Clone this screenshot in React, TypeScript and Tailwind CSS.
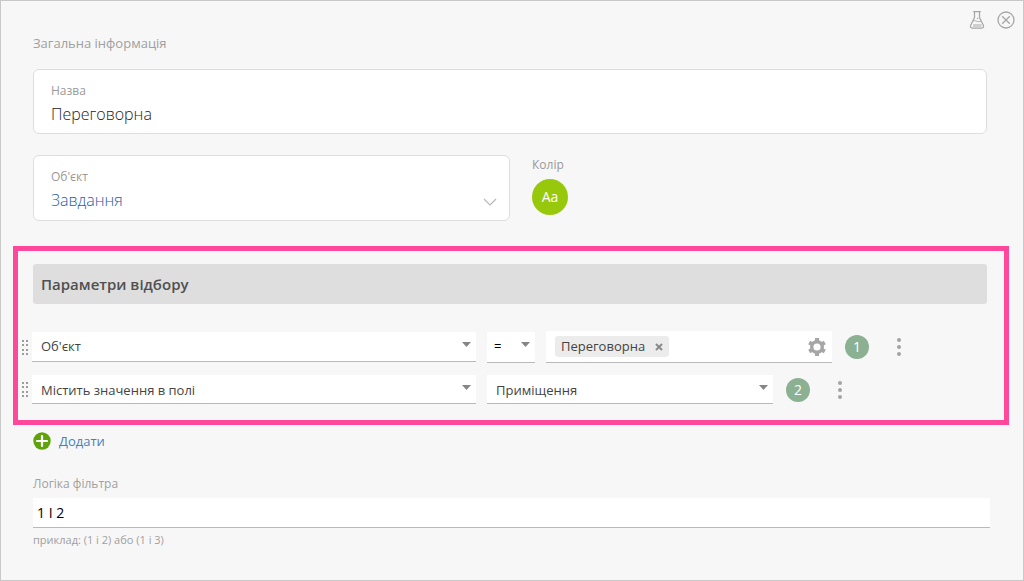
import { ReactNode, useState } from "react";
import clsx from "clsx";

function FlaskIcon() {
  return (
    <svg width="16" height="20" viewBox="0 0 16 20" fill="none" stroke="#a6a6a6">
      <path d="M4.2 1.6h7.6M5.500 2v5.600L1.700 15.200c-.7 1.800 0 2.900 1.600 2.900h9.400c1.600 0 2.300-1.100 1.600-2.900L10.500 7.600V2" strokeWidth="1.200" />
      <path d="M3.600 11.300c1.500-1 2.800-.7 4.200 0s2.800.6 4.300-.6" strokeWidth="0.900" />
      <circle cx="8.600" cy="8.500" r="0.700" fill="#a6a6a6" stroke="none" />
      <rect x="4" y="14" width="8.500" height="3" fill="#cfcfcf" stroke="none" />
    </svg>
  );
}

function CloseIcon() {
  return (
    <svg width="18" height="18" viewBox="0 0 18 18" fill="none" stroke="#a6a6a6" strokeWidth="1.300">
      <circle cx="9" cy="9" r="8" />
      <path d="M5.200 5.200l7.600 7.600M12.800 5.200l-7.600 7.600" />
    </svg>
  );
}

function GearIcon() {
  return (
    <svg width="20" height="20" viewBox="2 2 20 20" fill="none" stroke="#a6a6a6">
      <circle cx="12" cy="12" r="5.300" strokeWidth="3.400" />
      <path
        d="M12 3v3M12 18v3M4.200 7.500l2.600 1.500M17.200 15l2.600 1.500M4.200 16.500l2.600-1.500M17.200 9l2.600-1.500"
        strokeWidth="4"
      />
    </svg>
  );
}

function DragHandle() {
  return (
    <svg className="shrink-0 cursor-move" width="6" height="15" viewBox="0 0 6 15" fill="#9c9c9c">
      {[0, 4, 9, 13].map((y) => (
        <g key={y}>
          <rect x="0" y={y} width="2" height="2" />
          <rect x="4" y={y} width="2" height="2" />
        </g>
      ))}
    </svg>
  );
}

function MoreButton() {
  return (
    <button type="button" aria-label="Ще" className="ml-[26px] flex w-2 justify-center">
      <svg width="4" height="18" viewBox="0 0 4 18" fill="#a3a3a3">
        <circle cx="2" cy="2" r="2" />
        <circle cx="2" cy="9" r="2" />
        <circle cx="2" cy="16" r="2" />
      </svg>
    </button>
  );
}

function Badge({ children }: { children: ReactNode }) {
  return (
    <span className="ml-[13px] flex size-6 shrink-0 items-center justify-center rounded-full bg-[#8cb092] text-sm text-white">
      {children}
    </span>
  );
}

function FlatSelect({
  label,
  options,
  className,
  selectClassName,
}: {
  label: string;
  options: string[];
  className?: string;
  selectClassName?: string;
}) {
  return (
    <div className={clsx("relative", className)}>
      <select
        aria-label={label}
        className={clsx(
          "block w-full appearance-none border-b border-[#b9b9b9] bg-white pr-6 text-[13px] outline-none",
          selectClassName
        )}
      >
        {options.map((option) => (
          <option key={option}>{option}</option>
        ))}
      </select>
      <svg
        className="pointer-events-none absolute top-2.5 right-[5px]"
        width="9"
        height="5"
        viewBox="0 0 9 5"
        fill="#868686"
      >
        <path d="M0 0h9L4.500 5z" />
      </svg>
    </div>
  );
}

export default function App() {
  const [name, setName] = useState("Переговорна");
  const [logic, setLogic] = useState("1 І 2");

  return (
    <div className="relative min-h-screen border border-[#c8c8c8] bg-[#f7f7f7] pt-8 pb-6 font-['Open_Sans','Noto_Sans',sans-serif] text-[#444]">
      <div className="absolute top-[9px] right-2 flex items-center gap-3">
        <button type="button" aria-label="Тест">
          <FlaskIcon />
        </button>
        <button type="button" aria-label="Закрити">
          <CloseIcon />
        </button>
      </div>

      {/* General info */}
      <section className="pr-9 pl-8">
        <h2 className="text-[13px] leading-5 text-[#a0a0a0]">Загальна інформація</h2>

        <div className="mt-4 h-[65px] rounded-md border border-[#dedede] bg-white px-[17px] pt-[13px]">
          <label htmlFor="name" className="block text-xs leading-4 text-[#999]">
            Назва
          </label>
          <input
            id="name"
            value={name}
            onChange={(e) => setName(e.target.value)}
            className="mt-[3px] block h-6 w-full bg-transparent text-base leading-6 font-light text-[#222] outline-none"
          />
        </div>

        <div className="mt-[21px] flex gap-[22px]">
          <div className="relative h-[66px] w-1/2 rounded-md border border-[#dedede] bg-white px-[17px] pt-[13px]">
            <label htmlFor="object" className="block text-xs leading-4 text-[#999]">
              Об'єкт
            </label>
            <select
              id="object"
              className="mt-[3px] block h-6 w-full appearance-none bg-transparent text-base leading-6 font-light text-[#1f5ca8] outline-none"
            >
              <option>Завдання</option>
            </select>
            <svg
              className="pointer-events-none absolute right-3 bottom-[14px]"
              width="14"
              height="8"
              viewBox="0 0 14 8"
              fill="none"
              stroke="#b8b8b8"
              strokeWidth="1.200"
            >
              <path d="M1 1l6 6 6-6" />
            </svg>
          </div>
          <div>
            <div className="text-xs leading-5 text-[#999]">Колір</div>
            <button
              type="button"
              className="mt-1 flex size-9 items-center justify-center rounded-full bg-[#97c80c] text-sm text-white"
            >
              Aa
            </button>
          </div>
        </div>
      </section>

      {/* Selection parameters */}
      <section className="mt-[25px] mr-3.5 ml-3 border-[5px] border-[#ff479c] pt-[13px] pr-[17px] pb-4 pl-1">
        <h2 className="ml-[11px] rounded-[3px] bg-[#dedede] px-2 text-[15px] leading-10 font-semibold text-[#505050]">
          Параметри відбору
        </h2>

        <div className="mt-[27px] flex h-8 items-center">
          <DragHandle />
          <FlatSelect label="Тип умови" options={["Об'єкт"]} className="ml-1 w-[444px]" selectClassName="h-[30px] pl-[9px]" />
          <FlatSelect label="Оператор" options={["="]} className="ml-[11px] w-12" selectClassName="h-[31px] pl-[7px] text-black" />
          <div className="ml-[11px] flex h-8 w-[286px] items-center justify-between border-b border-[#b9b9b9] bg-white pr-[5px] pl-[9px]">
            <span className="flex h-[21px] w-[114px] items-center justify-between rounded-[3px] bg-[#ececec] px-1.5 text-[13px]">
              Переговорна
              <button type="button" aria-label="Прибрати">
                <svg width="8" height="8" viewBox="0 0 8 8" stroke="#8a8a8a" strokeWidth="2">
                  <path d="M1 1l6 6M7 1L1 7" />
                </svg>
              </button>
            </span>
            <button type="button" aria-label="Налаштування">
              <GearIcon />
            </button>
          </div>
          <Badge>1</Badge>
          <MoreButton />
        </div>

        <div className="mt-3 flex h-[29px] items-center">
          <DragHandle />
          <FlatSelect label="Тип умови" options={["Містить значення в полі"]} className="ml-1 w-[444px]" selectClassName="h-[29px] pt-[3px] pl-[9px]" />
          <FlatSelect label="Поле" options={["Приміщення"]} className="ml-[11px] w-[286px]" selectClassName="h-[29px] pt-[3px] pl-[9px]" />
          <Badge>2</Badge>
          <MoreButton />
        </div>
      </section>

      <section className="pr-[33px] pl-8">
        <button type="button" className="mt-1.5 flex items-center gap-2 text-[13px] leading-5 text-[#4a7ebb]">
          <svg width="18" height="18" viewBox="0 0 18 18">
            <circle cx="9" cy="9" r="8.700" fill="#5fa30b" />
            <path d="M9 4v10M4 9h10" stroke="#fff" strokeWidth="2.200" strokeLinecap="round" />
          </svg>
          Додати
        </button>

        <label htmlFor="logic" className="mt-[23px] block text-xs leading-5 text-[#a0a0a0]">
          Логіка фільтра
        </label>
        <input
          id="logic"
          value={logic}
          onChange={(e) => setLogic(e.target.value)}
          className="mt-1 block h-[30px] w-full border-b border-[#b9b9b9] bg-white px-1 text-sm text-black outline-none"
        />
        <p className="mt-1 text-[11px] leading-4 text-[#a0a0a0]">приклад: (1 і 2) або (1 і 3)</p>
      </section>
    </div>
  );
}
